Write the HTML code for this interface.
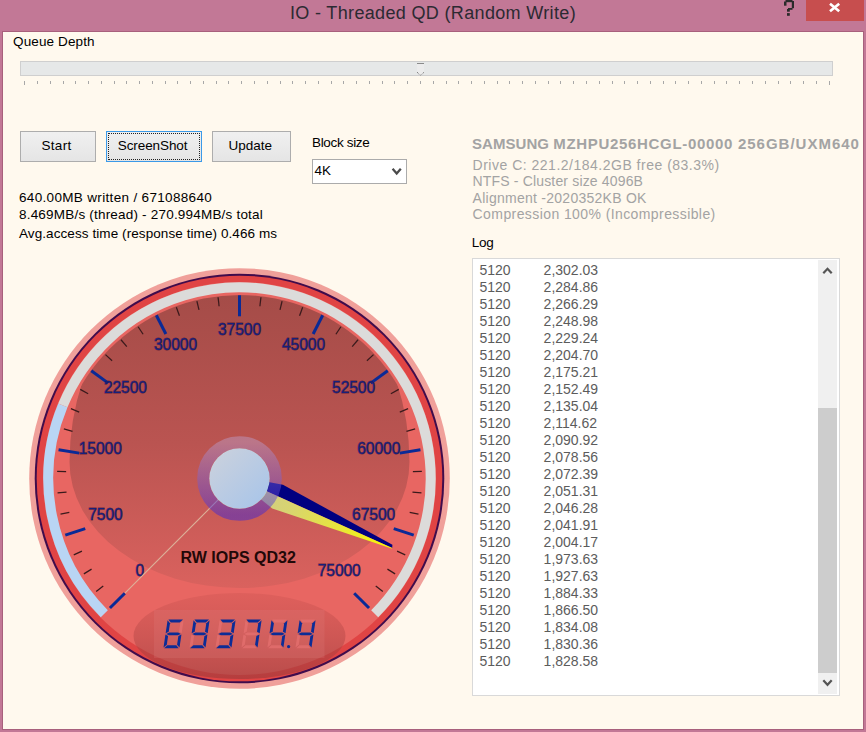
<!DOCTYPE html>
<html><head><meta charset="utf-8">
<style>
html,body{margin:0;padding:0;}
body{width:866px;height:732px;position:relative;overflow:hidden;background:#c27896;font-family:"Liberation Sans", sans-serif;}
.t{position:absolute;white-space:pre;line-height:1;}
#client{position:absolute;left:2px;top:31px;width:860px;height:697px;background:#fff9ee;border:1px solid #a8607c;overflow:hidden;}
.btn{position:absolute;box-sizing:border-box;border:1px solid #adadad;background:linear-gradient(#f0f0f0,#e5e5e5);}
</style></head><body>
<div class="t" style="left:290.0px;top:4.4px;font-size:18px;color:#2c2a32;letter-spacing:0.34px">IO - Threaded QD (Random Write)</div>
<svg style="position:absolute;left:0;top:0" width="866" height="40"><g fill="#2a2a2a"><rect x="785.5" y="0" width="7" height="2.2"/><rect x="784" y="1.5" width="2.5" height="4.2"/><rect x="791.8" y="1" width="2.2" height="7.2"/><rect x="788" y="8" width="4.5" height="1.8"/><rect x="787" y="9" width="2.8" height="2.7"/><rect x="787" y="13.1" width="2.8" height="2.7"/></g></svg>
<div style="position:absolute;left:806px;top:0;width:58px;height:21px;background:#c74e4e"></div>
<svg style="position:absolute;left:0;top:0" width="866" height="732">
<path d="M830,3.8 L839.2,11.3 M839.2,3.8 L830,11.3" stroke="#fff" stroke-width="2.7"/>
</svg>
<div id="client"></div>
<svg style="position:absolute;left:0;top:0" width="866" height="732">
<rect x="20.5" y="61.5" width="812" height="14" fill="#e6e8e8" stroke="#cfcfcf" stroke-width="1"/>
<rect x="24" y="81" width="1" height="4" fill="#a8a8a8"/>
<rect x="37" y="81" width="1" height="3" fill="#a8a8a8"/>
<rect x="50" y="81" width="1" height="3" fill="#a8a8a8"/>
<rect x="63" y="81" width="1" height="3" fill="#a8a8a8"/>
<rect x="75" y="81" width="1" height="3" fill="#a8a8a8"/>
<rect x="88" y="81" width="1" height="3" fill="#a8a8a8"/>
<rect x="101" y="81" width="1" height="3" fill="#a8a8a8"/>
<rect x="114" y="81" width="1" height="3" fill="#a8a8a8"/>
<rect x="126" y="81" width="1" height="3" fill="#a8a8a8"/>
<rect x="139" y="81" width="1" height="3" fill="#a8a8a8"/>
<rect x="152" y="81" width="1" height="3" fill="#a8a8a8"/>
<rect x="165" y="81" width="1" height="3" fill="#a8a8a8"/>
<rect x="177" y="81" width="1" height="3" fill="#a8a8a8"/>
<rect x="190" y="81" width="1" height="3" fill="#a8a8a8"/>
<rect x="203" y="81" width="1" height="3" fill="#a8a8a8"/>
<rect x="216" y="81" width="1" height="3" fill="#a8a8a8"/>
<rect x="228" y="81" width="1" height="3" fill="#a8a8a8"/>
<rect x="241" y="81" width="1" height="3" fill="#a8a8a8"/>
<rect x="254" y="81" width="1" height="3" fill="#a8a8a8"/>
<rect x="267" y="81" width="1" height="3" fill="#a8a8a8"/>
<rect x="280" y="81" width="1" height="3" fill="#a8a8a8"/>
<rect x="292" y="81" width="1" height="3" fill="#a8a8a8"/>
<rect x="305" y="81" width="1" height="3" fill="#a8a8a8"/>
<rect x="318" y="81" width="1" height="3" fill="#a8a8a8"/>
<rect x="331" y="81" width="1" height="3" fill="#a8a8a8"/>
<rect x="343" y="81" width="1" height="3" fill="#a8a8a8"/>
<rect x="356" y="81" width="1" height="3" fill="#a8a8a8"/>
<rect x="369" y="81" width="1" height="3" fill="#a8a8a8"/>
<rect x="382" y="81" width="1" height="3" fill="#a8a8a8"/>
<rect x="394" y="81" width="1" height="3" fill="#a8a8a8"/>
<rect x="407" y="81" width="1" height="3" fill="#a8a8a8"/>
<rect x="420" y="81" width="1" height="3" fill="#a8a8a8"/>
<rect x="433" y="81" width="1" height="3" fill="#a8a8a8"/>
<rect x="446" y="81" width="1" height="3" fill="#a8a8a8"/>
<rect x="458" y="81" width="1" height="3" fill="#a8a8a8"/>
<rect x="471" y="81" width="1" height="3" fill="#a8a8a8"/>
<rect x="484" y="81" width="1" height="3" fill="#a8a8a8"/>
<rect x="497" y="81" width="1" height="3" fill="#a8a8a8"/>
<rect x="509" y="81" width="1" height="3" fill="#a8a8a8"/>
<rect x="522" y="81" width="1" height="3" fill="#a8a8a8"/>
<rect x="535" y="81" width="1" height="3" fill="#a8a8a8"/>
<rect x="548" y="81" width="1" height="3" fill="#a8a8a8"/>
<rect x="560" y="81" width="1" height="3" fill="#a8a8a8"/>
<rect x="573" y="81" width="1" height="3" fill="#a8a8a8"/>
<rect x="586" y="81" width="1" height="3" fill="#a8a8a8"/>
<rect x="599" y="81" width="1" height="3" fill="#a8a8a8"/>
<rect x="612" y="81" width="1" height="3" fill="#a8a8a8"/>
<rect x="624" y="81" width="1" height="3" fill="#a8a8a8"/>
<rect x="637" y="81" width="1" height="3" fill="#a8a8a8"/>
<rect x="650" y="81" width="1" height="3" fill="#a8a8a8"/>
<rect x="663" y="81" width="1" height="3" fill="#a8a8a8"/>
<rect x="675" y="81" width="1" height="3" fill="#a8a8a8"/>
<rect x="688" y="81" width="1" height="3" fill="#a8a8a8"/>
<rect x="701" y="81" width="1" height="3" fill="#a8a8a8"/>
<rect x="714" y="81" width="1" height="3" fill="#a8a8a8"/>
<rect x="726" y="81" width="1" height="3" fill="#a8a8a8"/>
<rect x="739" y="81" width="1" height="3" fill="#a8a8a8"/>
<rect x="752" y="81" width="1" height="3" fill="#a8a8a8"/>
<rect x="765" y="81" width="1" height="3" fill="#a8a8a8"/>
<rect x="778" y="81" width="1" height="3" fill="#a8a8a8"/>
<rect x="790" y="81" width="1" height="3" fill="#a8a8a8"/>
<rect x="803" y="81" width="1" height="3" fill="#a8a8a8"/>
<rect x="816" y="81" width="1" height="3" fill="#a8a8a8"/>
<rect x="829" y="81" width="1" height="4" fill="#a8a8a8"/>
<path d="M417,63.5 H424 V73 L420.5,75.5 L417,73 Z" fill="#ececec"/>
<rect x="417" y="63" width="7" height="1" fill="#8a8a8a"/>
<path d="M417.5,72 L417.5,73 L420.5,75.2 L423.5,73 L423.5,72" stroke="#7a7a7a" stroke-width="0.9" fill="none" stroke-dasharray="1.2,0.8"/>
<defs>
<linearGradient id="dark" gradientUnits="userSpaceOnUse" x1="0" y1="296" x2="0" y2="590"><stop offset="0" stop-color="#a54c48"/><stop offset="0.5" stop-color="#ba5451"/><stop offset="1" stop-color="#da625e"/></linearGradient>
<linearGradient id="ring" x1="0" y1="0" x2="0" y2="1"><stop offset="0" stop-color="#bc9cc8"/><stop offset="1" stop-color="#3a24d8"/></linearGradient>
<linearGradient id="cap" x1="0" y1="0" x2="1" y2="1"><stop offset="0" stop-color="#cdd2dc"/><stop offset="1" stop-color="#a6c4ea"/></linearGradient>
<linearGradient id="yel" gradientUnits="userSpaceOnUse" x1="240" y1="478" x2="392" y2="547"><stop offset="0" stop-color="#cdc890"/><stop offset="0.35" stop-color="#d8d470"/><stop offset="1" stop-color="#f8f800"/></linearGradient>
<clipPath id="face"><circle cx="239.5" cy="478.5" r="183.5"/></clipPath>
<linearGradient id="ell" x1="0" y1="0" x2="0" y2="1"><stop offset="0" stop-color="#c04c4a" stop-opacity="0.25"/><stop offset="1" stop-color="#983a3a" stop-opacity="0.6"/></linearGradient>
</defs>
<circle cx="239.5" cy="478.5" r="210.3" fill="#f0a09a"/>
<circle cx="239.5" cy="478.5" r="204.8" fill="#400c4c"/>
<circle cx="239.5" cy="478.5" r="202.8" fill="#e04444"/>
<circle cx="239.5" cy="478.5" r="196.5" fill="#e86662"/>
<g clip-path="url(#face)" fill="url(#dark)"><path d="M69.5,462 A170,210 0 0 1 409.5,462 A170,126 0 0 1 69.5,462 Z"/></g>
<path d="M104.30,613.70 A191.2,191.2 0 0 1 62.85,405.33" stroke="#b9d5f4" stroke-width="10" fill="none"/>
<path d="M62.85,405.33 A191.2,191.2 0 1 1 374.70,613.70" stroke="#dcdbda" stroke-width="10" fill="none"/>
<ellipse cx="239.5" cy="636" rx="106" ry="43" fill="url(#ell)"/>
<rect x="154" y="610" width="170.5" height="48" fill="#e08080" fill-opacity="0.22"/>
<line x1="124.81" y1="593.19" x2="109.96" y2="608.04" stroke="#0a2a96" stroke-width="3"/>
<line x1="103.25" y1="585.91" x2="96.18" y2="591.48" stroke="#3a1a1c" stroke-width="1.25"/>
<line x1="91.57" y1="569.15" x2="83.89" y2="573.86" stroke="#3a1a1c" stroke-width="1.25"/>
<line x1="81.94" y1="551.14" x2="73.76" y2="554.91" stroke="#3a1a1c" stroke-width="1.25"/>
<line x1="85.24" y1="528.62" x2="65.27" y2="535.11" stroke="#0a2a96" stroke-width="3"/>
<line x1="69.33" y1="512.35" x2="60.51" y2="514.10" stroke="#3a1a1c" stroke-width="1.25"/>
<line x1="66.53" y1="492.11" x2="57.56" y2="492.82" stroke="#3a1a1c" stroke-width="1.25"/>
<line x1="66.13" y1="471.69" x2="57.14" y2="471.34" stroke="#3a1a1c" stroke-width="1.25"/>
<line x1="79.30" y1="453.13" x2="58.56" y2="449.84" stroke="#0a2a96" stroke-width="3"/>
<line x1="72.51" y1="431.41" x2="63.85" y2="428.96" stroke="#3a1a1c" stroke-width="1.25"/>
<line x1="79.21" y1="412.10" x2="70.89" y2="408.66" stroke="#3a1a1c" stroke-width="1.25"/>
<line x1="88.12" y1="393.72" x2="80.27" y2="389.33" stroke="#3a1a1c" stroke-width="1.25"/>
<line x1="108.28" y1="383.16" x2="91.29" y2="370.82" stroke="#0a2a96" stroke-width="3"/>
<line x1="112.10" y1="360.73" x2="105.49" y2="354.62" stroke="#3a1a1c" stroke-width="1.25"/>
<line x1="126.82" y1="346.57" x2="120.98" y2="339.73" stroke="#3a1a1c" stroke-width="1.25"/>
<line x1="143.11" y1="334.24" x2="138.11" y2="326.76" stroke="#3a1a1c" stroke-width="1.25"/>
<line x1="165.86" y1="333.98" x2="156.33" y2="315.27" stroke="#0a2a96" stroke-width="3"/>
<line x1="179.45" y1="315.72" x2="176.33" y2="307.28" stroke="#3a1a1c" stroke-width="1.25"/>
<line x1="199.00" y1="309.79" x2="196.90" y2="301.04" stroke="#3a1a1c" stroke-width="1.25"/>
<line x1="219.11" y1="306.20" x2="218.05" y2="297.27" stroke="#3a1a1c" stroke-width="1.25"/>
<line x1="239.50" y1="316.30" x2="239.50" y2="295.30" stroke="#0a2a96" stroke-width="3"/>
<line x1="259.89" y1="306.20" x2="260.95" y2="297.27" stroke="#3a1a1c" stroke-width="1.25"/>
<line x1="280.00" y1="309.79" x2="282.10" y2="301.04" stroke="#3a1a1c" stroke-width="1.25"/>
<line x1="299.55" y1="315.72" x2="302.67" y2="307.28" stroke="#3a1a1c" stroke-width="1.25"/>
<line x1="313.14" y1="333.98" x2="322.67" y2="315.27" stroke="#0a2a96" stroke-width="3"/>
<line x1="335.89" y1="334.24" x2="340.89" y2="326.76" stroke="#3a1a1c" stroke-width="1.25"/>
<line x1="352.18" y1="346.57" x2="358.02" y2="339.73" stroke="#3a1a1c" stroke-width="1.25"/>
<line x1="366.90" y1="360.73" x2="373.51" y2="354.62" stroke="#3a1a1c" stroke-width="1.25"/>
<line x1="370.72" y1="383.16" x2="387.71" y2="370.82" stroke="#0a2a96" stroke-width="3"/>
<line x1="390.88" y1="393.72" x2="398.73" y2="389.33" stroke="#3a1a1c" stroke-width="1.25"/>
<line x1="399.79" y1="412.10" x2="408.11" y2="408.66" stroke="#3a1a1c" stroke-width="1.25"/>
<line x1="406.49" y1="431.41" x2="415.15" y2="428.96" stroke="#3a1a1c" stroke-width="1.25"/>
<line x1="399.70" y1="453.13" x2="420.44" y2="449.84" stroke="#0a2a96" stroke-width="3"/>
<line x1="412.87" y1="471.69" x2="421.86" y2="471.34" stroke="#3a1a1c" stroke-width="1.25"/>
<line x1="412.47" y1="492.11" x2="421.44" y2="492.82" stroke="#3a1a1c" stroke-width="1.25"/>
<line x1="409.67" y1="512.35" x2="418.49" y2="514.10" stroke="#3a1a1c" stroke-width="1.25"/>
<line x1="393.76" y1="528.62" x2="413.73" y2="535.11" stroke="#0a2a96" stroke-width="3"/>
<line x1="397.06" y1="551.14" x2="405.24" y2="554.91" stroke="#3a1a1c" stroke-width="1.25"/>
<line x1="387.43" y1="569.15" x2="395.11" y2="573.86" stroke="#3a1a1c" stroke-width="1.25"/>
<line x1="375.75" y1="585.91" x2="382.82" y2="591.48" stroke="#3a1a1c" stroke-width="1.25"/>
<line x1="354.19" y1="593.19" x2="369.04" y2="608.04" stroke="#0a2a96" stroke-width="3"/>
<text x="139.80" y="575.80" text-anchor="middle" font-size="16.2" textLength="8.62" lengthAdjust="spacingAndGlyphs" fill="#16207c" font-family="Liberation Sans, sans-serif" stroke="#3a0c30" stroke-width="1.0" stroke-opacity="0.65" paint-order="stroke">0</text>
<text x="105.40" y="519.67" text-anchor="middle" font-size="16.2" textLength="34.48" lengthAdjust="spacingAndGlyphs" fill="#16207c" font-family="Liberation Sans, sans-serif" stroke="#3a0c30" stroke-width="1.0" stroke-opacity="0.65" paint-order="stroke">7500</text>
<text x="100.24" y="454.04" text-anchor="middle" font-size="16.2" textLength="43.10" lengthAdjust="spacingAndGlyphs" fill="#16207c" font-family="Liberation Sans, sans-serif" stroke="#3a0c30" stroke-width="1.0" stroke-opacity="0.65" paint-order="stroke">15000</text>
<text x="125.43" y="393.22" text-anchor="middle" font-size="16.2" textLength="43.10" lengthAdjust="spacingAndGlyphs" fill="#16207c" font-family="Liberation Sans, sans-serif" stroke="#3a0c30" stroke-width="1.0" stroke-opacity="0.65" paint-order="stroke">22500</text>
<text x="175.49" y="350.47" text-anchor="middle" font-size="16.2" textLength="43.10" lengthAdjust="spacingAndGlyphs" fill="#16207c" font-family="Liberation Sans, sans-serif" stroke="#3a0c30" stroke-width="1.0" stroke-opacity="0.65" paint-order="stroke">30000</text>
<text x="239.50" y="335.10" text-anchor="middle" font-size="16.2" textLength="43.10" lengthAdjust="spacingAndGlyphs" fill="#16207c" font-family="Liberation Sans, sans-serif" stroke="#3a0c30" stroke-width="1.0" stroke-opacity="0.65" paint-order="stroke">37500</text>
<text x="303.51" y="350.47" text-anchor="middle" font-size="16.2" textLength="43.10" lengthAdjust="spacingAndGlyphs" fill="#16207c" font-family="Liberation Sans, sans-serif" stroke="#3a0c30" stroke-width="1.0" stroke-opacity="0.65" paint-order="stroke">45000</text>
<text x="353.57" y="393.22" text-anchor="middle" font-size="16.2" textLength="43.10" lengthAdjust="spacingAndGlyphs" fill="#16207c" font-family="Liberation Sans, sans-serif" stroke="#3a0c30" stroke-width="1.0" stroke-opacity="0.65" paint-order="stroke">52500</text>
<text x="378.76" y="454.04" text-anchor="middle" font-size="16.2" textLength="43.10" lengthAdjust="spacingAndGlyphs" fill="#16207c" font-family="Liberation Sans, sans-serif" stroke="#3a0c30" stroke-width="1.0" stroke-opacity="0.65" paint-order="stroke">60000</text>
<text x="373.60" y="519.67" text-anchor="middle" font-size="16.2" textLength="43.10" lengthAdjust="spacingAndGlyphs" fill="#16207c" font-family="Liberation Sans, sans-serif" stroke="#3a0c30" stroke-width="1.0" stroke-opacity="0.65" paint-order="stroke">67500</text>
<text x="339.20" y="575.80" text-anchor="middle" font-size="16.2" textLength="43.10" lengthAdjust="spacingAndGlyphs" fill="#16207c" font-family="Liberation Sans, sans-serif" stroke="#3a0c30" stroke-width="1.0" stroke-opacity="0.65" paint-order="stroke">75000</text>
<line x1="218.29" y1="499.71" x2="124.95" y2="593.05" stroke="#dcb29a" stroke-width="1.1"/>
<text x="238.2" y="562.6" text-anchor="middle" font-size="16" font-weight="bold" fill="#220808" font-family="Liberation Sans, sans-serif">RW IOPS QD32</text>
<polygon points="239.50,478.90 268.23,482.10 282.96,484.70 392.40,544.80 392.20,548.10" fill="#000080"/>
<polygon points="239.50,478.90 392.20,548.10 391.60,548.50 272.22,508.49 260.61,498.97" fill="url(#yel)"/>
<circle cx="239.5" cy="478.5" r="36.3" fill="none" stroke="url(#ring)" stroke-width="12" stroke-opacity="0.47"/>
<circle cx="239.5" cy="478.5" r="30.2" fill="url(#cap)"/>
<g transform="translate(0,647.6) skewX(-8.5) translate(0,-647.6)">
<polygon points="164.20,619.60 178.80,619.60 175.95,622.45 167.05,622.45" fill="#0c2c96"/>
<polygon points="164.20,648.20 178.80,648.20 175.95,645.35 167.05,645.35" fill="#0c2c96"/>
<polygon points="163.50,620.30 166.35,623.15 166.35,631.77 163.50,633.20" fill="#0c2c96"/>
<polygon points="163.50,634.60 166.35,636.02 166.35,644.65 163.50,647.50" fill="#0c2c96"/>
<polygon points="179.50,620.30 176.65,623.15 176.65,631.77 179.50,633.20" fill="#ec7676" fill-opacity="0.55"/>
<polygon points="179.50,634.60 176.65,636.02 176.65,644.65 179.50,647.50" fill="#0c2c96"/>
<polygon points="164.20,633.90 167.05,632.48 175.95,632.48 178.80,633.90 175.95,635.32 167.05,635.32" fill="#0c2c96"/>
<polygon points="190.20,619.60 204.80,619.60 201.95,622.45 193.05,622.45" fill="#0c2c96"/>
<polygon points="190.20,648.20 204.80,648.20 201.95,645.35 193.05,645.35" fill="#0c2c96"/>
<polygon points="189.50,620.30 192.35,623.15 192.35,631.77 189.50,633.20" fill="#0c2c96"/>
<polygon points="189.50,634.60 192.35,636.02 192.35,644.65 189.50,647.50" fill="#ec7676" fill-opacity="0.55"/>
<polygon points="205.50,620.30 202.65,623.15 202.65,631.77 205.50,633.20" fill="#0c2c96"/>
<polygon points="205.50,634.60 202.65,636.02 202.65,644.65 205.50,647.50" fill="#0c2c96"/>
<polygon points="190.20,633.90 193.05,632.48 201.95,632.48 204.80,633.90 201.95,635.32 193.05,635.32" fill="#0c2c96"/>
<polygon points="216.20,619.60 230.80,619.60 227.95,622.45 219.05,622.45" fill="#0c2c96"/>
<polygon points="216.20,648.20 230.80,648.20 227.95,645.35 219.05,645.35" fill="#0c2c96"/>
<polygon points="215.50,620.30 218.35,623.15 218.35,631.77 215.50,633.20" fill="#ec7676" fill-opacity="0.55"/>
<polygon points="215.50,634.60 218.35,636.02 218.35,644.65 215.50,647.50" fill="#ec7676" fill-opacity="0.55"/>
<polygon points="231.50,620.30 228.65,623.15 228.65,631.77 231.50,633.20" fill="#0c2c96"/>
<polygon points="231.50,634.60 228.65,636.02 228.65,644.65 231.50,647.50" fill="#0c2c96"/>
<polygon points="216.20,633.90 219.05,632.48 227.95,632.48 230.80,633.90 227.95,635.32 219.05,635.32" fill="#0c2c96"/>
<polygon points="242.20,619.60 256.80,619.60 253.95,622.45 245.05,622.45" fill="#0c2c96"/>
<polygon points="242.20,648.20 256.80,648.20 253.95,645.35 245.05,645.35" fill="#ec7676" fill-opacity="0.55"/>
<polygon points="241.50,620.30 244.35,623.15 244.35,631.77 241.50,633.20" fill="#ec7676" fill-opacity="0.55"/>
<polygon points="241.50,634.60 244.35,636.02 244.35,644.65 241.50,647.50" fill="#ec7676" fill-opacity="0.55"/>
<polygon points="257.50,620.30 254.65,623.15 254.65,631.77 257.50,633.20" fill="#0c2c96"/>
<polygon points="257.50,634.60 254.65,636.02 254.65,644.65 257.50,647.50" fill="#0c2c96"/>
<polygon points="242.20,633.90 245.05,632.48 253.95,632.48 256.80,633.90 253.95,635.32 245.05,635.32" fill="#ec7676" fill-opacity="0.55"/>
<polygon points="268.10,619.60 282.70,619.60 279.85,622.45 270.95,622.45" fill="#ec7676" fill-opacity="0.55"/>
<polygon points="268.10,648.20 282.70,648.20 279.85,645.35 270.95,645.35" fill="#ec7676" fill-opacity="0.55"/>
<polygon points="267.40,620.30 270.25,623.15 270.25,631.77 267.40,633.20" fill="#0c2c96"/>
<polygon points="267.40,634.60 270.25,636.02 270.25,644.65 267.40,647.50" fill="#ec7676" fill-opacity="0.55"/>
<polygon points="283.40,620.30 280.55,623.15 280.55,631.77 283.40,633.20" fill="#0c2c96"/>
<polygon points="283.40,634.60 280.55,636.02 280.55,644.65 283.40,647.50" fill="#0c2c96"/>
<polygon points="268.10,633.90 270.95,632.48 279.85,632.48 282.70,633.90 279.85,635.32 270.95,635.32" fill="#0c2c96"/>
<polygon points="296.20,619.60 310.80,619.60 307.95,622.45 299.05,622.45" fill="#ec7676" fill-opacity="0.55"/>
<polygon points="296.20,648.20 310.80,648.20 307.95,645.35 299.05,645.35" fill="#ec7676" fill-opacity="0.55"/>
<polygon points="295.50,620.30 298.35,623.15 298.35,631.77 295.50,633.20" fill="#0c2c96"/>
<polygon points="295.50,634.60 298.35,636.02 298.35,644.65 295.50,647.50" fill="#ec7676" fill-opacity="0.55"/>
<polygon points="311.50,620.30 308.65,623.15 308.65,631.77 311.50,633.20" fill="#0c2c96"/>
<polygon points="311.50,634.60 308.65,636.02 308.65,644.65 311.50,647.50" fill="#0c2c96"/>
<polygon points="296.20,633.90 299.05,632.48 307.95,632.48 310.80,633.90 307.95,635.32 299.05,635.32" fill="#0c2c96"/>
</g>
<circle cx="288.6" cy="646.6" r="1.6" fill="#0c2c96"/>
</svg>
<div class="t" style="left:13.00px;top:35.37px;font-size:13.5px;color:#000;letter-spacing:0.13px;font-weight:normal;">Queue Depth</div>
<div class="btn" style="left:20px;top:131px;width:76px;height:31px"></div><div class="btn" style="left:106px;top:131px;width:96px;height:31px;border-color:#3c9ae8"></div><div style="position:absolute;left:108px;top:133px;width:90px;height:25px;border:1px dotted #222"></div><div class="btn" style="left:212px;top:131px;width:79px;height:31px"></div><div class="t" style="left:41.60px;top:139.17px;font-size:13.5px;color:#000;letter-spacing:0.26px;font-weight:normal;">Start</div>
<div class="t" style="left:117.80px;top:139.37px;font-size:13.5px;color:#000;letter-spacing:-0.1px;font-weight:normal;">ScreenShot</div>
<div class="t" style="left:228.60px;top:138.97px;font-size:13.5px;color:#000;letter-spacing:0px;font-weight:normal;">Update</div>
<div class="t" style="left:312.00px;top:136.37px;font-size:13.5px;color:#000;letter-spacing:-0.34px;font-weight:normal;">Block size</div>
<div style="position:absolute;left:312px;top:159px;width:93px;height:23px;border:1px solid #ababab;background:#fff"></div><div class="t" style="left:314.60px;top:164.27px;font-size:13.5px;color:#000;letter-spacing:0px;font-weight:normal;">4K</div>
<svg style="position:absolute;left:0;top:0" width="866" height="732"><path d="M392.6,168.8 L396.7,173.4 L400.8,168.8" stroke="#4a4a4a" stroke-width="2.3" fill="none"/></svg><div class="t" style="left:19.00px;top:190.77px;font-size:13.5px;color:#000;letter-spacing:0.33px;font-weight:normal;">640.00MB written / 671088640</div>
<div class="t" style="left:19.00px;top:208.07px;font-size:13.5px;color:#000;letter-spacing:0.2px;font-weight:normal;">8.469MB/s (thread) - 270.994MB/s total</div>
<div class="t" style="left:19.00px;top:226.67px;font-size:13.5px;color:#000;letter-spacing:0.08px;font-weight:normal;">Avg.access time (response time) 0.466 ms</div>
<div class="t" style="left:472.0px;top:135.90px;font-size:15px;font-weight:bold;color:#a3a3a3"><span style="letter-spacing:0.05px">SAMSUNG </span><span style="letter-spacing:0.68px">MZHPU256HCGL-00000 </span><span style="letter-spacing:1.0px">256GB/UXM640</span></div>
<div class="t" style="left:472.60px;top:158.15px;font-size:14px;color:#a3a3a3;letter-spacing:0.5px;font-weight:normal;">Drive C: 221.2/184.2GB free (83.3%)</div>
<div class="t" style="left:472.60px;top:174.25px;font-size:14px;color:#a3a3a3;letter-spacing:0.16px;font-weight:normal;">NTFS - Cluster size 4096B</div>
<div class="t" style="left:472.60px;top:190.75px;font-size:14px;color:#a3a3a3;letter-spacing:0.26px;font-weight:normal;">Alignment -2020352KB OK</div>
<div class="t" style="left:472.60px;top:207.35px;font-size:14px;color:#a3a3a3;letter-spacing:0.41px;font-weight:normal;">Compression 100% (Incompressible)</div>
<div class="t" style="left:471.80px;top:235.57px;font-size:13.5px;color:#000;letter-spacing:-0.33px;font-weight:normal;">Log</div>
<div style="position:absolute;left:472px;top:258px;width:366px;height:436px;border:1px solid #d9d9d9;background:#fff"></div><div style="position:absolute;left:818px;top:260px;width:19px;height:434px;background:#f0f0f0"></div><div style="position:absolute;left:818px;top:408px;width:19px;height:265px;background:#cdcdcd"></div><svg style="position:absolute;left:0;top:0" width="866" height="732"><path d="M823.3,273.3 L827.5,268.8 L831.7,273.3" stroke="#555555" stroke-width="2.2" fill="none"/><path d="M823.3,680.3 L827.5,684.8 L831.7,680.3" stroke="#555555" stroke-width="2.2" fill="none"/></svg>
<div class="t" style="left:479.50px;top:263.05px;font-size:14px;color:#5c5c5c;letter-spacing:0px;font-weight:normal;">5120</div>
<div class="t" style="left:543.60px;top:263.05px;font-size:14px;color:#5c5c5c;letter-spacing:0px;font-weight:normal;">2,302.03</div>
<div class="t" style="left:479.50px;top:280.05px;font-size:14px;color:#5c5c5c;letter-spacing:0px;font-weight:normal;">5120</div>
<div class="t" style="left:543.60px;top:280.05px;font-size:14px;color:#5c5c5c;letter-spacing:0px;font-weight:normal;">2,284.86</div>
<div class="t" style="left:479.50px;top:297.05px;font-size:14px;color:#5c5c5c;letter-spacing:0px;font-weight:normal;">5120</div>
<div class="t" style="left:543.60px;top:297.05px;font-size:14px;color:#5c5c5c;letter-spacing:0px;font-weight:normal;">2,266.29</div>
<div class="t" style="left:479.50px;top:314.05px;font-size:14px;color:#5c5c5c;letter-spacing:0px;font-weight:normal;">5120</div>
<div class="t" style="left:543.60px;top:314.05px;font-size:14px;color:#5c5c5c;letter-spacing:0px;font-weight:normal;">2,248.98</div>
<div class="t" style="left:479.50px;top:331.05px;font-size:14px;color:#5c5c5c;letter-spacing:0px;font-weight:normal;">5120</div>
<div class="t" style="left:543.60px;top:331.05px;font-size:14px;color:#5c5c5c;letter-spacing:0px;font-weight:normal;">2,229.24</div>
<div class="t" style="left:479.50px;top:348.05px;font-size:14px;color:#5c5c5c;letter-spacing:0px;font-weight:normal;">5120</div>
<div class="t" style="left:543.60px;top:348.05px;font-size:14px;color:#5c5c5c;letter-spacing:0px;font-weight:normal;">2,204.70</div>
<div class="t" style="left:479.50px;top:365.05px;font-size:14px;color:#5c5c5c;letter-spacing:0px;font-weight:normal;">5120</div>
<div class="t" style="left:543.60px;top:365.05px;font-size:14px;color:#5c5c5c;letter-spacing:0px;font-weight:normal;">2,175.21</div>
<div class="t" style="left:479.50px;top:382.05px;font-size:14px;color:#5c5c5c;letter-spacing:0px;font-weight:normal;">5120</div>
<div class="t" style="left:543.60px;top:382.05px;font-size:14px;color:#5c5c5c;letter-spacing:0px;font-weight:normal;">2,152.49</div>
<div class="t" style="left:479.50px;top:399.05px;font-size:14px;color:#5c5c5c;letter-spacing:0px;font-weight:normal;">5120</div>
<div class="t" style="left:543.60px;top:399.05px;font-size:14px;color:#5c5c5c;letter-spacing:0px;font-weight:normal;">2,135.04</div>
<div class="t" style="left:479.50px;top:416.05px;font-size:14px;color:#5c5c5c;letter-spacing:0px;font-weight:normal;">5120</div>
<div class="t" style="left:543.60px;top:416.05px;font-size:14px;color:#5c5c5c;letter-spacing:0px;font-weight:normal;">2,114.62</div>
<div class="t" style="left:479.50px;top:433.05px;font-size:14px;color:#5c5c5c;letter-spacing:0px;font-weight:normal;">5120</div>
<div class="t" style="left:543.60px;top:433.05px;font-size:14px;color:#5c5c5c;letter-spacing:0px;font-weight:normal;">2,090.92</div>
<div class="t" style="left:479.50px;top:450.05px;font-size:14px;color:#5c5c5c;letter-spacing:0px;font-weight:normal;">5120</div>
<div class="t" style="left:543.60px;top:450.05px;font-size:14px;color:#5c5c5c;letter-spacing:0px;font-weight:normal;">2,078.56</div>
<div class="t" style="left:479.50px;top:467.05px;font-size:14px;color:#5c5c5c;letter-spacing:0px;font-weight:normal;">5120</div>
<div class="t" style="left:543.60px;top:467.05px;font-size:14px;color:#5c5c5c;letter-spacing:0px;font-weight:normal;">2,072.39</div>
<div class="t" style="left:479.50px;top:484.05px;font-size:14px;color:#5c5c5c;letter-spacing:0px;font-weight:normal;">5120</div>
<div class="t" style="left:543.60px;top:484.05px;font-size:14px;color:#5c5c5c;letter-spacing:0px;font-weight:normal;">2,051.31</div>
<div class="t" style="left:479.50px;top:501.05px;font-size:14px;color:#5c5c5c;letter-spacing:0px;font-weight:normal;">5120</div>
<div class="t" style="left:543.60px;top:501.05px;font-size:14px;color:#5c5c5c;letter-spacing:0px;font-weight:normal;">2,046.28</div>
<div class="t" style="left:479.50px;top:518.05px;font-size:14px;color:#5c5c5c;letter-spacing:0px;font-weight:normal;">5120</div>
<div class="t" style="left:543.60px;top:518.05px;font-size:14px;color:#5c5c5c;letter-spacing:0px;font-weight:normal;">2,041.91</div>
<div class="t" style="left:479.50px;top:535.05px;font-size:14px;color:#5c5c5c;letter-spacing:0px;font-weight:normal;">5120</div>
<div class="t" style="left:543.60px;top:535.05px;font-size:14px;color:#5c5c5c;letter-spacing:0px;font-weight:normal;">2,004.17</div>
<div class="t" style="left:479.50px;top:552.05px;font-size:14px;color:#5c5c5c;letter-spacing:0px;font-weight:normal;">5120</div>
<div class="t" style="left:543.60px;top:552.05px;font-size:14px;color:#5c5c5c;letter-spacing:0px;font-weight:normal;">1,973.63</div>
<div class="t" style="left:479.50px;top:569.05px;font-size:14px;color:#5c5c5c;letter-spacing:0px;font-weight:normal;">5120</div>
<div class="t" style="left:543.60px;top:569.05px;font-size:14px;color:#5c5c5c;letter-spacing:0px;font-weight:normal;">1,927.63</div>
<div class="t" style="left:479.50px;top:586.05px;font-size:14px;color:#5c5c5c;letter-spacing:0px;font-weight:normal;">5120</div>
<div class="t" style="left:543.60px;top:586.05px;font-size:14px;color:#5c5c5c;letter-spacing:0px;font-weight:normal;">1,884.33</div>
<div class="t" style="left:479.50px;top:603.05px;font-size:14px;color:#5c5c5c;letter-spacing:0px;font-weight:normal;">5120</div>
<div class="t" style="left:543.60px;top:603.05px;font-size:14px;color:#5c5c5c;letter-spacing:0px;font-weight:normal;">1,866.50</div>
<div class="t" style="left:479.50px;top:620.05px;font-size:14px;color:#5c5c5c;letter-spacing:0px;font-weight:normal;">5120</div>
<div class="t" style="left:543.60px;top:620.05px;font-size:14px;color:#5c5c5c;letter-spacing:0px;font-weight:normal;">1,834.08</div>
<div class="t" style="left:479.50px;top:637.05px;font-size:14px;color:#5c5c5c;letter-spacing:0px;font-weight:normal;">5120</div>
<div class="t" style="left:543.60px;top:637.05px;font-size:14px;color:#5c5c5c;letter-spacing:0px;font-weight:normal;">1,830.36</div>
<div class="t" style="left:479.50px;top:654.05px;font-size:14px;color:#5c5c5c;letter-spacing:0px;font-weight:normal;">5120</div>
<div class="t" style="left:543.60px;top:654.05px;font-size:14px;color:#5c5c5c;letter-spacing:0px;font-weight:normal;">1,828.58</div>
</body></html>
